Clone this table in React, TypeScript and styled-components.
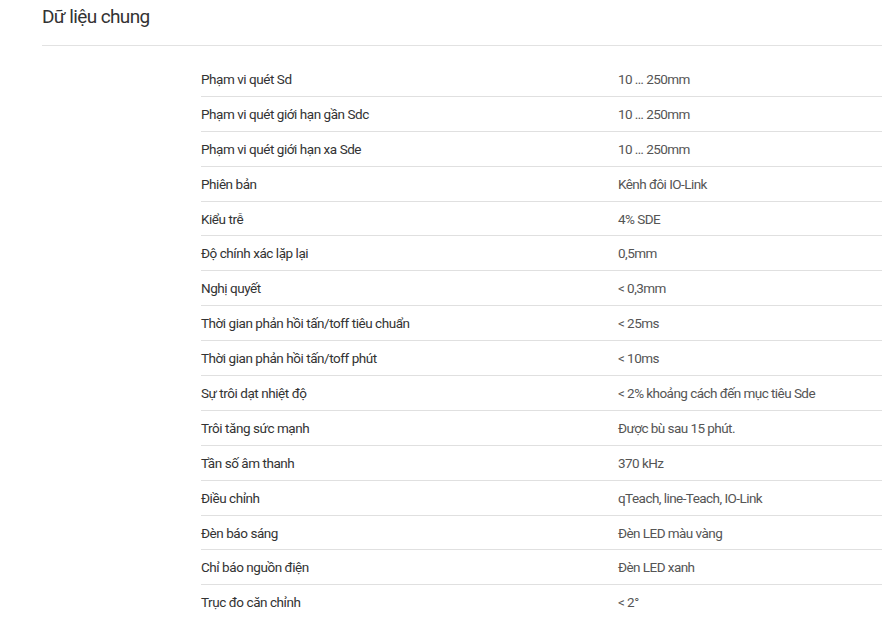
import styled, { createGlobalStyle } from "styled-components";

const GlobalStyle = createGlobalStyle`
    body {
        margin: 0;
        background: #fff;
        font-family: Roboto, "Liberation Sans", sans-serif;
    }
`;

const Section = styled.section`
    padding: 0 0 0 42px;
`;

const Title = styled.h2`
    margin: 0;
    height: 45px;
    font-size: 19px;
    line-height: 34px;
    font-weight: 400;
    color: #333;
    border-bottom: 1px solid #e2e2e2;
    letter-spacing: -0.6px;
`;

const Table = styled.div`
    margin: 16px 0 0 159px;
`;

const Row = styled.div<{ $last?: boolean }>`
    display: grid;
    grid-template-columns: 417px 1fr;
    align-items: center;
    height: 33.9px;
    border-bottom: 1px solid ${(p) => (p.$last ? "transparent" : "#e0e0e0")};
    font-size: 13.5px;
`;

const Label = styled.div`
    color: #333;
    letter-spacing: -0.45px;
`;

const Value = styled.div`
    color: #555;
    letter-spacing: -0.55px;
`;

const rows: [string, string][] = [
    ["Phạm vi quét Sd", "10 … 250mm"],
    ["Phạm vi quét giới hạn gần Sdc", "10 … 250mm"],
    ["Phạm vi quét giới hạn xa Sde", "10 … 250mm"],
    ["Phiên bản", "Kênh đôi IO-Link"],
    ["Kiểu trễ", "4% SDE"],
    ["Độ chính xác lặp lại", "0,5mm"],
    ["Nghị quyết", "< 0,3mm"],
    ["Thời gian phản hồi tấn/toff tiêu chuẩn", "< 25ms"],
    ["Thời gian phản hồi tấn/toff phút", "< 10ms"],
    ["Sự trôi dạt nhiệt độ", "< 2% khoảng cách đến mục tiêu Sde"],
    ["Trôi tăng sức mạnh", "Được bù sau 15 phút."],
    ["Tần số âm thanh", "370 kHz"],
    ["Điều chỉnh", "qTeach, line-Teach, IO-Link"],
    ["Đèn báo sáng", "Đèn LED màu vàng"],
    ["Chỉ báo nguồn điện", "Đèn LED xanh"],
    ["Trục đo căn chỉnh", "< 2°"],
];

const App: React.FC = () => {
    return (
        <>
            <GlobalStyle />
            <Section>
                <Title>Dữ liệu chung</Title>
                <Table>
                    {rows.map(([label, value], i) => (
                        <Row key={label} $last={i === rows.length - 1}>
                            <Label>{label}</Label>
                            <Value>{value}</Value>
                        </Row>
                    ))}
                </Table>
            </Section>
        </>
    );
};

export default App;
